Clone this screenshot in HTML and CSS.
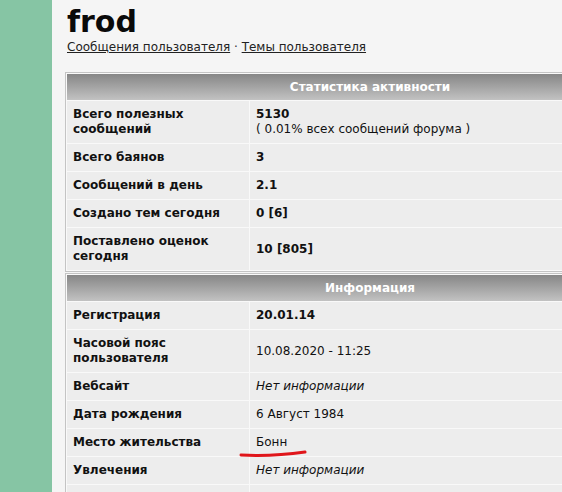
FILE: index.html
```html
<!DOCTYPE html>
<html lang="ru">
<head>
    <meta charset="UTF-8">
    <title>frod</title>
    <link rel="stylesheet" href="styles.css">
</head>
<body>
    <div class="sidebar"></div>

    <div class="content">
        <h1 class="username">frod</h1>
        <div class="user-links">
            <a href="#">Сообщения пользователя</a> · <a href="#">Темы пользователя</a>
        </div>

        <table class="profile-table">
            <tr>
                <th colspan="2">Статистика активности</th>
            </tr>
            <tr>
                <td class="label">Всего полезных сообщений</td>
                <td class="value"><b>5130</b><br>( 0.01% всех сообщений форума )</td>
            </tr>
            <tr>
                <td class="label">Всего баянов</td>
                <td class="value"><b>3</b></td>
            </tr>
            <tr>
                <td class="label">Сообщений в день</td>
                <td class="value"><b>2.1</b></td>
            </tr>
            <tr>
                <td class="label">Создано тем сегодня</td>
                <td class="value"><b>0 [6]</b></td>
            </tr>
            <tr>
                <td class="label">Поставлено оценок сегодня</td>
                <td class="value"><b>10 [805]</b></td>
            </tr>
        </table>

        <table class="profile-table">
            <tr>
                <th colspan="2">Информация</th>
            </tr>
            <tr>
                <td class="label">Регистрация</td>
                <td class="value"><b>20.01.14</b></td>
            </tr>
            <tr>
                <td class="label">Часовой пояс пользователя</td>
                <td class="value">10.08.2020 - 11:25</td>
            </tr>
            <tr>
                <td class="label">Вебсайт</td>
                <td class="value"><i>Нет информации</i></td>
            </tr>
            <tr>
                <td class="label">Дата рождения</td>
                <td class="value">6 Август 1984</td>
            </tr>
            <tr>
                <td class="label">Место жительства</td>
                <td class="value city">Бонн
                    <svg class="scribble" width="70" height="10" viewBox="0 0 70 10">
                        <path d="M2 7 C 20 8, 45 7, 66 4" fill="none" stroke="#e0161b" stroke-width="3" stroke-linecap="round"/>
                    </svg>
                </td>
            </tr>
            <tr>
                <td class="label">Увлечения</td>
                <td class="value"><i>Нет информации</i></td>
            </tr>
            <tr>
                <td class="label">&nbsp;</td>
                <td class="value">&nbsp;</td>
            </tr>
        </table>
    </div>
</body>
</html>
```

FILE: styles.css
```css
body {
    margin: 0;
    padding: 0;
    height: 492px;
    overflow: hidden;
    background-color: #f5f5f5;
    font-family: 'DejaVu Sans', Verdana, sans-serif;
    font-size: 12px;
    color: #111;
    display: flex;
}

.sidebar {
    width: 52px;
    flex-shrink: 0;
    background-color: #86c5a4;
}

.content {
    padding: 6px 0 0 13px;
}

.username {
    margin: 0 0 0 2px;
    font-size: 30px;
    line-height: 32px;
    font-weight: bold;
    color: #0a0a0a;
}

.user-links {
    margin: 1px 0 0 2px;
    line-height: 16px;
    color: #333;
}

.user-links a {
    color: #222;
    text-decoration: underline;
}

.profile-table {
    width: 610px;
    margin-top: 17px;
    border: 1px solid #c4c4c4;
    border-spacing: 1px;
    background-color: #f9f9f9;
}

.profile-table + .profile-table {
    margin-top: 1px;
}

.profile-table th {
    height: 26px;
    padding: 0;
    color: #fff;
    font-size: 12px;
    background: linear-gradient(#868686, #c2c2c2);
}

.profile-table td {
    background-color: #ededed;
    padding: 6px;
    line-height: 15px;
    vertical-align: middle;
}

.label {
    width: 170px;
    font-weight: bold;
}

.city {
    position: relative;
}

.scribble {
    position: absolute;
    left: -11px;
    top: 19px;
}
```
